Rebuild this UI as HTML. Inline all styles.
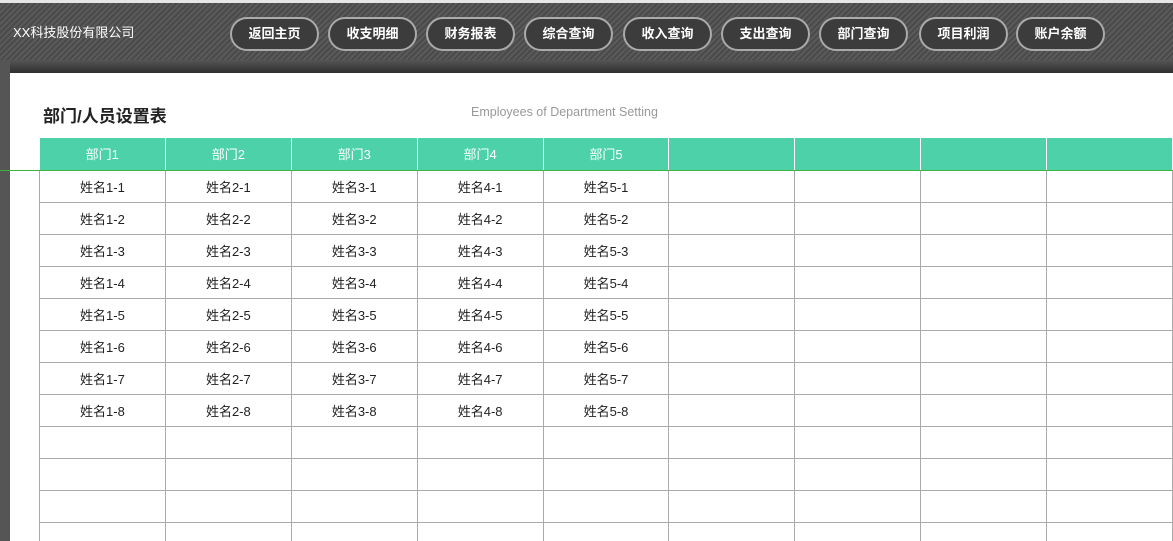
<!DOCTYPE html>
<html style="width:1173px;height:541px;overflow:hidden"><head><meta charset="utf-8"><style>
*{margin:0;padding:0;box-sizing:border-box}
body{width:1173px;height:541px;overflow:hidden;background:#fff;position:relative;font-family:"Liberation Sans","Noto Sans CJK SC",sans-serif}
.top{position:absolute;left:0;top:0;width:1173px;height:3px;background:#e6e6e6}
.hdr{position:absolute;left:0;top:3px;width:1173px;height:57px;background:repeating-linear-gradient(135deg,#4a4a4a 0 2px,#5a5a5a 2px 4px)}
.logo{position:absolute;left:13px;top:19px;color:#fff;font-size:13px}
.btn{position:absolute;top:17px;height:34px;width:89px;border:2px solid #aaa;border-radius:17px;background:#3c3c3c;color:#fff;font-weight:bold;font-size:13px;text-align:center;line-height:30px}
.bar{position:absolute;left:10px;top:60px;width:1163px;height:13px;background:linear-gradient(#555,#2e2e2e)}
.lbar{position:absolute;left:0;top:60px;width:10px;height:481px;background:#555}
.title{position:absolute;left:43px;top:102px;font-size:17px;font-weight:bold;color:#222}
.sub{position:absolute;left:471px;top:105px;font-size:12.5px;color:#999}
.wrap{position:absolute;left:0;top:0;width:1173px;height:541px;overflow:hidden}
table{position:absolute;left:39px;top:138px;border-collapse:collapse}
td{width:126px;height:32px;border:1px solid #aaa;text-align:center;font-size:13px;color:#222}
th{width:126px;height:32px;background:#4cd1a8;color:#fff;font-weight:normal;font-size:13px;border-right:1px solid #fff}
.gl{position:absolute;left:0;top:170px;width:1173px;height:1px;background:#3cb43c}
</style></head><body><div class="wrap">
<div class="top"></div>
<div class="hdr"><div class="logo">XX科技股份有限公司</div></div>
<div class="btn" style="left:230px">返回主页</div>
<div class="btn" style="left:328px">收支明细</div>
<div class="btn" style="left:426px">财务报表</div>
<div class="btn" style="left:524px">综合查询</div>
<div class="btn" style="left:623px">收入查询</div>
<div class="btn" style="left:721px">支出查询</div>
<div class="btn" style="left:819px">部门查询</div>
<div class="btn" style="left:919px">项目利润</div>
<div class="btn" style="left:1016px">账户余额</div>
<div class="bar"></div><div class="lbar"></div>
<div class="title">部门/人员设置表</div>
<div class="sub">Employees of Department Setting</div>
<table>
<tr><th>部门1</th><th>部门2</th><th>部门3</th><th>部门4</th><th>部门5</th><th></th><th></th><th></th><th></th></tr>
<tr><td>姓名1-1</td><td>姓名2-1</td><td>姓名3-1</td><td>姓名4-1</td><td>姓名5-1</td><td></td><td></td><td></td><td></td></tr>
<tr><td>姓名1-2</td><td>姓名2-2</td><td>姓名3-2</td><td>姓名4-2</td><td>姓名5-2</td><td></td><td></td><td></td><td></td></tr>
<tr><td>姓名1-3</td><td>姓名2-3</td><td>姓名3-3</td><td>姓名4-3</td><td>姓名5-3</td><td></td><td></td><td></td><td></td></tr>
<tr><td>姓名1-4</td><td>姓名2-4</td><td>姓名3-4</td><td>姓名4-4</td><td>姓名5-4</td><td></td><td></td><td></td><td></td></tr>
<tr><td>姓名1-5</td><td>姓名2-5</td><td>姓名3-5</td><td>姓名4-5</td><td>姓名5-5</td><td></td><td></td><td></td><td></td></tr>
<tr><td>姓名1-6</td><td>姓名2-6</td><td>姓名3-6</td><td>姓名4-6</td><td>姓名5-6</td><td></td><td></td><td></td><td></td></tr>
<tr><td>姓名1-7</td><td>姓名2-7</td><td>姓名3-7</td><td>姓名4-7</td><td>姓名5-7</td><td></td><td></td><td></td><td></td></tr>
<tr><td>姓名1-8</td><td>姓名2-8</td><td>姓名3-8</td><td>姓名4-8</td><td>姓名5-8</td><td></td><td></td><td></td><td></td></tr>
<tr><td></td><td></td><td></td><td></td><td></td><td></td><td></td><td></td><td></td></tr>
<tr><td></td><td></td><td></td><td></td><td></td><td></td><td></td><td></td><td></td></tr>
<tr><td></td><td></td><td></td><td></td><td></td><td></td><td></td><td></td><td></td></tr>
<tr><td></td><td></td><td></td><td></td><td></td><td></td><td></td><td></td><td></td></tr>
</table>
<div class="gl"></div>
</div></body></html>
